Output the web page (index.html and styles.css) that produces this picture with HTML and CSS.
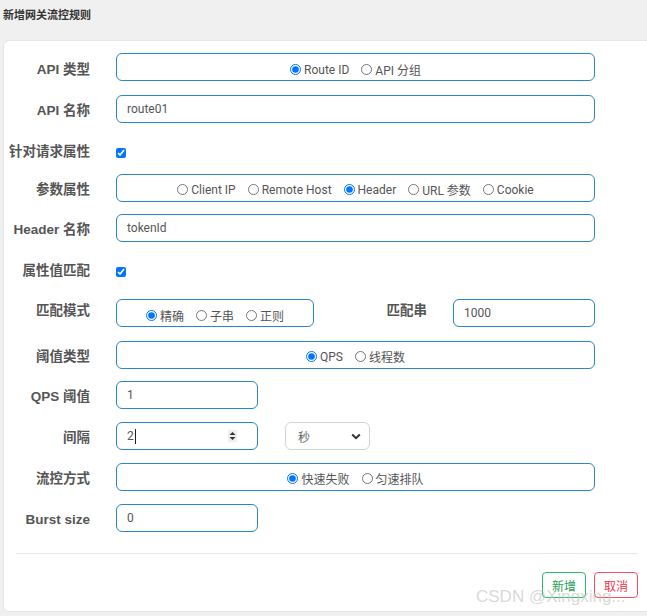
FILE: index.html
```html
<!DOCTYPE html>
<html lang="zh-CN">
<head>
<meta charset="utf-8">
<title>新增网关流控规则</title>
<link rel="stylesheet" href="styles.css">
</head>
<body>
<div class="title">新增网关流控规则</div>
<div class="panel">
  <div class="row">
    <div class="label">API 类型</div>
    <div class="box radios lower">
      <label class="opt"><input type="radio" name="apitype" checked>Route ID</label>
      <label class="opt"><input type="radio" name="apitype">API 分组</label>
    </div>
  </div>
  <div class="row mt14">
    <div class="label">API 名称</div>
    <input class="box input" type="text" value="route01">
  </div>
  <div class="row check-row mt18">
    <div class="label">针对请求属性</div>
    <input class="check" type="checkbox" checked>
  </div>
  <div class="row">
    <div class="label">参数属性</div>
    <div class="box radios">
      <label class="opt"><input type="radio" name="param">Client IP</label>
      <label class="opt"><input type="radio" name="param">Remote Host</label>
      <label class="opt"><input type="radio" name="param" checked>Header</label>
      <label class="opt"><input type="radio" name="param">URL 参数</label>
      <label class="opt"><input type="radio" name="param">Cookie</label>
    </div>
  </div>
  <div class="row mt12">
    <div class="label">Header 名称</div>
    <input class="box input" type="text" value="tokenId">
  </div>
  <div class="row check-row mt18">
    <div class="label">属性值匹配</div>
    <input class="check" type="checkbox" checked>
  </div>
  <div class="row top mt19">
    <div class="label">匹配模式</div>
    <div class="box radios mid lower">
      <label class="opt"><input type="radio" name="match" checked>精确</label>
      <label class="opt"><input type="radio" name="match">子串</label>
      <label class="opt"><input type="radio" name="match">正则</label>
    </div>
    <div class="label label-wide">匹配串</div>
    <input class="box input short" type="text" value="1000">
  </div>
  <div class="row mt14">
    <div class="label">阈值类型</div>
    <div class="box radios">
      <label class="opt"><input type="radio" name="grade" checked>QPS</label>
      <label class="opt"><input type="radio" name="grade">线程数</label>
    </div>
  </div>
  <div class="row mt12">
    <div class="label">QPS 阈值</div>
    <input class="box input short" type="text" value="1">
  </div>
  <div class="row">
    <div class="label">间隔</div>
    <div class="box input short number">
      <span class="num-text">2</span><span class="caret"></span>
      <span class="spinner"><svg width="7" height="10" viewBox="0 0 7 10"><path d="M3.5 1L6.5 4H0.5Z M3.5 9L6.5 6H0.5Z" fill="#333"/></svg></span>
    </div>
    <div class="select">
      <span>秒</span>
      <svg width="10" height="7" viewBox="0 0 10 7"><path d="M1.2 1.5L5 5.2 8.8 1.5" fill="none" stroke="#333" stroke-width="2"/></svg>
    </div>
  </div>
  <div class="row">
    <div class="label">流控方式</div>
    <div class="box radios">
      <label class="opt"><input type="radio" name="behavior" checked>快速失败</label>
      <label class="opt"><input type="radio" name="behavior">匀速排队</label>
    </div>
  </div>
  <div class="row">
    <div class="label">Burst size</div>
    <input class="box input short" type="text" value="0">
  </div>
  <div class="sep"></div>
  <div class="actions">
    <button class="btn btn-add">新增</button>
    <button class="btn btn-cancel">取消</button>
  </div>
</div>
<div class="watermark">CSDN @Xingxing...</div>
</body>
</html>
```
FILE: styles.css
```css
html, body {
  margin: 0;
  overflow: hidden;
}
body {
  position: relative;
  width: 647px;
  height: 616px;
  background: #f0f0f0;
  font-family: Roboto, "Noto Sans CJK SC", sans-serif;
  color: #555;
}
.title {
  box-sizing: border-box;
  height: 40px;
  padding: 6px 0 0 3px;
  font: bold 11px/16px "Noto Sans CJK SC", sans-serif;
  color: #333;
}
.panel {
  margin-left: 3px;
  width: 670px;
  box-sizing: border-box;
  background: #fff;
  border: 1px solid #e4e4e4;
  border-radius: 6px;
  padding: 12px 0 13px;
}
.row {
  display: flex;
  align-items: center;
  height: 28px;
  margin-top: 13px;
}
.row:first-child { margin-top: 0; }
.row.top { align-items: flex-start; }
.mt12 { margin-top: 12px; }
.mt14 { margin-top: 14px; }
.mt18 { margin-top: 18px; }
.mt19 { margin-top: 19px; }
.check-row { height: 20px; }
.label {
  flex: none;
  width: 86px;
  margin-right: 26px;
  padding-top: 4px;
  text-align: right;
  font: bold 13.5px/22px "Liberation Sans", "Noto Sans CJK SC", sans-serif;
  color: #555;
}
.row:first-child .label { padding-top: 6px; }
.check-row .label { padding-top: 2px; }
.row.top .label { padding-top: 1px; }
.label-wide { width: 113px; }
.box {
  flex: none;
  box-sizing: border-box;
  width: 479px;
  height: 28px;
  margin: 0;
  border: 1px solid #2a86c5;
  border-radius: 6px;
  background: #fff;
  font: 12px Roboto, "Noto Sans CJK SC", sans-serif;
  color: #555;
}
.box.mid { width: 198px; margin-right: 0; }
.box.short { width: 142px; }
.radios {
  display: flex;
  justify-content: center;
  align-items: center;
  gap: 12px;
  padding-top: 3px;
}
.radios.lower { padding-top: 5px; }
.opt {
  display: flex;
  align-items: center;
  white-space: nowrap;
}
.opt input {
  width: 11px;
  height: 11px;
  margin: 0 3px 0 0;
}
.input {
  padding: 0 10px;
  outline: none;
}
.check {
  width: 10px;
  height: 10px;
  margin: 4px 0 0;
}
.number {
  display: flex;
  align-items: center;
}
.num-text { line-height: 16px; }
.caret {
  width: 1px;
  height: 15px;
  margin-left: 1px;
  background: #222;
}
.spinner {
  margin-left: auto;
  margin-right: 10px;
  width: 9px;
  height: 12px;
  display: flex;
  align-items: center;
  justify-content: center;
  background: #efefef;
}
.select {
  flex: none;
  box-sizing: border-box;
  width: 85px;
  height: 28px;
  margin-left: 27px;
  padding: 0 8px 0 12px;
  display: flex;
  align-items: center;
  justify-content: space-between;
  border: 1px solid #d4d4d4;
  border-radius: 6px;
  font: 12px "Noto Sans CJK SC", sans-serif;
  color: #666;
}
.sep {
  width: 622px;
  height: 1px;
  margin: 21px 0 0 12px;
  background: #e6e6e6;
}
.actions {
  width: 622px;
  margin: 18px 0 0 12px;
  display: flex;
  justify-content: flex-end;
  gap: 8px;
}
.btn {
  box-sizing: border-box;
  width: 44px;
  height: 26px;
  padding: 0;
  background: #fff;
  border-radius: 4px;
  font: 12px "Noto Sans CJK SC", sans-serif;
}
.btn-add {
  border: 1px solid #2cb866;
  color: #1fa055;
}
.btn-cancel {
  border: 1px solid #ff4a5f;
  color: #f5334a;
}
.watermark {
  position: absolute;
  left: 476px;
  top: 587px;
  font: 17px "Liberation Sans", sans-serif;
  color: rgba(190, 190, 190, 0.6);
  pointer-events: none;
}
```
